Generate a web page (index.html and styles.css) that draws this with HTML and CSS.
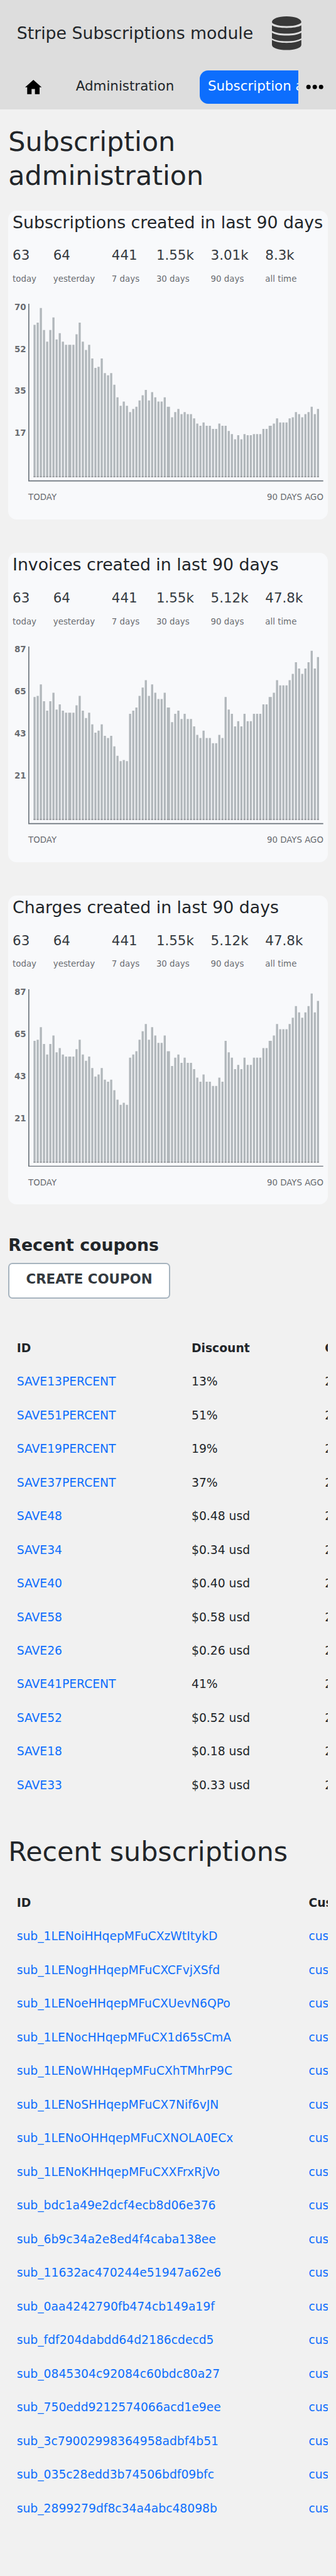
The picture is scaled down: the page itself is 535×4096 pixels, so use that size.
FILE: index.html
```html
<!DOCTYPE html>
<html lang="en">
<head>
<meta charset="utf-8">
<title>Stripe Subscriptions module</title>
<link rel="stylesheet" href="styles.css">
</head>
<body>
<header class="header">
  <div class="brand">
    <span class="brand-title">Stripe Subscriptions module</span>
    <svg class="brand-icon" viewBox="0 0 56 64"><path d="M0 11C0 4.500 12 0 28 0s28 4.500 28 11c0 3-10 7.500-28 7.500S0 14 0 11zM0 17c6 3.500 16 5 28 5s22-1.500 28-5v10.500c-6 3.700-16 5.400-28 5.400S6 31.200 0 27.500zM0 31c6 3.700 16 5.500 28 5.500s22-1.800 28-5.500v11c-6 3.700-16 5.400-28 5.400S6 45.700 0 42zM0 45c6 3.700 16 5.600 28 5.600s22-1.900 28-5.600v9c0 6-12 10-28 10S0 60 0 54z"/></svg>
  </div>
  <nav class="nav">
    <a class="nav-home"><svg class="home-icon" viewBox="0 0 32 28"><path d="M16 0L32 14.200H28V27.600H19V17.500H12.500V27.600H4V14.200H0z"/></svg></a>
    <a class="nav-link">Administration</a>
    <div class="nav-clip"><a class="nav-tab">Subscription administration</a></div>
    <svg class="dots" viewBox="0 0 34 10"><circle cx="5" cy="5" r="4.200"/><circle cx="17" cy="5" r="4.200"/><circle cx="29" cy="5" r="4.200"/></svg>
  </nav>
</header>
<main class="main">
  <h1 class="page-title">Subscription administration</h1>

  <section class="card">
    <h2 class="card-title">Subscriptions created in last 90 days</h2>
    <div class="stats">
      <div><b class="num">63</b><span class="lbl">today</span></div>
      <div><b class="num">64</b><span class="lbl">yesterday</span></div>
      <div><b class="num">441</b><span class="lbl">7 days</span></div>
      <div><b class="num">1.55k</b><span class="lbl">30 days</span></div>
      <div><b class="num">3.01k</b><span class="lbl">90 days</span></div>
      <div><b class="num">8.3k</b><span class="lbl">all time</span></div>
    </div>
    <div class="chart">
      <div class="scale"><span>70</span><span>52</span><span>35</span><span>17</span></div>
      <svg class="plot" viewBox="0 0 562 338" data-series="subscriptions"></svg>
    </div>
    <div class="range"><span>TODAY</span><span>90 DAYS AGO</span></div>
  </section>

  <section class="card">
    <h2 class="card-title">Invoices created in last 90 days</h2>
    <div class="stats">
      <div><b class="num">63</b><span class="lbl">today</span></div>
      <div><b class="num">64</b><span class="lbl">yesterday</span></div>
      <div><b class="num">441</b><span class="lbl">7 days</span></div>
      <div><b class="num">1.55k</b><span class="lbl">30 days</span></div>
      <div><b class="num">5.12k</b><span class="lbl">90 days</span></div>
      <div><b class="num">47.8k</b><span class="lbl">all time</span></div>
    </div>
    <div class="chart">
      <div class="scale"><span>87</span><span>65</span><span>43</span><span>21</span></div>
      <svg class="plot" viewBox="0 0 562 338" data-series="invoices"></svg>
    </div>
    <div class="range"><span>TODAY</span><span>90 DAYS AGO</span></div>
  </section>

  <section class="card">
    <h2 class="card-title">Charges created in last 90 days</h2>
    <div class="stats">
      <div><b class="num">63</b><span class="lbl">today</span></div>
      <div><b class="num">64</b><span class="lbl">yesterday</span></div>
      <div><b class="num">441</b><span class="lbl">7 days</span></div>
      <div><b class="num">1.55k</b><span class="lbl">30 days</span></div>
      <div><b class="num">5.12k</b><span class="lbl">90 days</span></div>
      <div><b class="num">47.8k</b><span class="lbl">all time</span></div>
    </div>
    <div class="chart">
      <div class="scale"><span>87</span><span>65</span><span>43</span><span>21</span></div>
      <svg class="plot" viewBox="0 0 562 338" data-series="charges"></svg>
    </div>
    <div class="range"><span>TODAY</span><span>90 DAYS AGO</span></div>
  </section>

  <h2 class="coupons-title">Recent coupons</h2>
  <a class="button">CREATE COUPON</a>

  <div class="table coupons">
    <div class="row head"><span>ID</span><span>Discount</span><span>Created</span></div>
    <div class="row"><a>SAVE13PERCENT</a><span>13%</span><span>2022</span></div>
    <div class="row"><a>SAVE51PERCENT</a><span>51%</span><span>2022</span></div>
    <div class="row"><a>SAVE19PERCENT</a><span>19%</span><span>2022</span></div>
    <div class="row"><a>SAVE37PERCENT</a><span>37%</span><span>2022</span></div>
    <div class="row"><a>SAVE48</a><span>$0.48 usd</span><span>2022</span></div>
    <div class="row"><a>SAVE34</a><span>$0.34 usd</span><span>2022</span></div>
    <div class="row"><a>SAVE40</a><span>$0.40 usd</span><span>2022</span></div>
    <div class="row"><a>SAVE58</a><span>$0.58 usd</span><span>2022</span></div>
    <div class="row"><a>SAVE26</a><span>$0.26 usd</span><span>2022</span></div>
    <div class="row"><a>SAVE41PERCENT</a><span>41%</span><span>2022</span></div>
    <div class="row"><a>SAVE52</a><span>$0.52 usd</span><span>2022</span></div>
    <div class="row"><a>SAVE18</a><span>$0.18 usd</span><span>2022</span></div>
    <div class="row"><a>SAVE33</a><span>$0.33 usd</span><span>2022</span></div>
  </div>

  <h2 class="subs-title">Recent subscriptions</h2>
  <div class="table subs">
    <div class="row head"><span>ID</span><span>Customer</span></div>
    <div class="row"><a>sub_1LENoiHHqepMFuCXzWtItykD</a><a>cus_</a></div>
    <div class="row"><a>sub_1LENogHHqepMFuCXCFvjXSfd</a><a>cus_</a></div>
    <div class="row"><a>sub_1LENoeHHqepMFuCXUevN6QPo</a><a>cus_</a></div>
    <div class="row"><a>sub_1LENocHHqepMFuCX1d65sCmA</a><a>cus_</a></div>
    <div class="row"><a>sub_1LENoWHHqepMFuCXhTMhrP9C</a><a>cus_</a></div>
    <div class="row"><a>sub_1LENoSHHqepMFuCX7Nif6vJN</a><a>cus_</a></div>
    <div class="row"><a>sub_1LENoOHHqepMFuCXNOLA0ECx</a><a>cus_</a></div>
    <div class="row"><a>sub_1LENoKHHqepMFuCXXFrxRjVo</a><a>cus_</a></div>
    <div class="row"><a>sub_bdc1a49e2dcf4ecb8d06e376</a><a>cus_</a></div>
    <div class="row"><a>sub_6b9c34a2e8ed4f4caba138ee</a><a>cus_</a></div>
    <div class="row"><a>sub_11632ac470244e51947a62e6</a><a>cus_</a></div>
    <div class="row"><a>sub_0aa4242790fb474cb149a19f</a><a>cus_</a></div>
    <div class="row"><a>sub_fdf204dabdd64d2186cdecd5</a><a>cus_</a></div>
    <div class="row"><a>sub_0845304c92084c60bdc80a27</a><a>cus_</a></div>
    <div class="row"><a>sub_750edd9212574066acd1e9ee</a><a>cus_</a></div>
    <div class="row"><a>sub_3c79002998364958adbf4b51</a><a>cus_</a></div>
    <div class="row"><a>sub_035c28edd3b74506bdf09bfc</a><a>cus_</a></div>
    <div class="row"><a>sub_2899279df8c34a4abc48098b</a><a>cus_</a></div>
  </div>
</main>
<script src="charts.js"></script>
</body>
</html>
```

FILE: styles.css
```css
/* 1rem is ten design units; the layout is 64rem wide. */
html { font-size: 8.3575px; }
* { box-sizing: border-box; }
body {
  margin: 0;
  height: 490.1rem;
  overflow: hidden;
  background: #f1f1f1;
  color: #212529;
  font-family: "DejaVu Sans", sans-serif;
  font-size: 2.56rem;
}
h1, h2 { margin: 0; font-weight: 400; }

.header { height: 20.8rem; background: #ddd; padding-top: 3.07rem; }
.brand { display: flex; height: 10.33rem; padding-left: 3.2rem; }
.brand-title { width: 48.6rem; font-size: 3.2rem; line-height: 6.4rem; white-space: nowrap; }
.brand-icon { width: 5.6rem; height: 6.4rem; margin-top: 0.1rem; fill: #383838; }

.nav { display: flex; height: 6.4rem; line-height: 5.9rem; white-space: nowrap; }
.nav-home { width: 14.45rem; padding: 1.85rem 0 0 4.84rem; line-height: 0; }
.home-icon { width: 3.15rem; height: 2.76rem; fill: #000; }
.nav-link { width: 23.55rem; }
.nav-clip { width: 18.8rem; overflow: hidden; }
.nav-tab { display: block; width: 42rem; height: 6.4rem; padding-left: 1.6rem; border-radius: 1.6rem; background: #0d6efd; color: #fff; }
.dots { width: 3.4rem; height: 1rem; margin: 2.67rem 0 0 1.5rem; }

.main { padding: 3.05rem 1.6rem 0; }
.page-title { height: 16.2rem; font-size: 5.12rem; line-height: 6.4rem; }

.card { height: 58.77rem; margin-bottom: 6.4rem; padding: 0 0.8rem; border-radius: 1.6rem; background: #f8f9fb; }
.card-title { height: 6.53rem; font-size: 3.2rem; line-height: 4.6rem; white-space: nowrap; }
.stats { display: flex; gap: 3.2rem; height: 10.7rem; white-space: nowrap; }
.num { display: block; height: 5.36rem; font-size: 2.56rem; font-weight: 400; line-height: 4rem; color: #343a40; }
.lbl { display: block; font-size: 1.6rem; line-height: 2.4rem; color: #696c71; }
.chart { display: flex; gap: 0.42rem; }
.scale { width: 2.58rem; font-size: 1.6rem; font-weight: 700; line-height: 2.4rem; text-align: right; color: #696c71; }
.scale span { display: block; height: 8rem; }
.plot { display: block; width: 56.2rem; height: 33.8rem; margin-top: 0.57rem; }
.axis { fill: #6c757d; }
.bars { fill: #b1b7bb; }
.feet { fill: #999b9f; }
.range { display: flex; justify-content: space-between; padding-left: 3rem; margin-top: 1.85rem; font-size: 1.6rem; line-height: 2.4rem; color: #696c71; }

.coupons-title { height: 5.48rem; margin-top: -0.79rem; font-size: 3.2rem; font-weight: 700; line-height: 4.4rem; }
.button {
  display: block;
  width: 30.8rem;
  height: 6.8rem;
  border: 2px solid #a7b4bf;
  border-radius: 0.8rem;
  background: #fff;
  color: #343a40;
  font-size: 2.56rem;
  font-weight: 700;
  line-height: 5.8rem;
  text-align: center;
}

.table { overflow: hidden; padding-left: 1.6rem; font-size: 2.24rem; line-height: 6.4rem; white-space: nowrap; }
.table a { color: #0d6efd; }
.row { display: grid; height: 6.4rem; }
.head { font-weight: 700; }
.coupons { margin-top: 6.22rem; }
.coupons .row { grid-template-columns: 33.3rem 25.4rem 10rem; }
.subs-title { margin-top: 6.31rem; padding-bottom: 3.27rem; font-size: 5.12rem; line-height: 6.4rem; white-space: nowrap; }
.subs .row { grid-template-columns: 55.6rem 20rem; }
```

FILE: charts.js
```js
// Bar heights per day, today first, in plot units (322 = tallest).
const series = {
  subscriptions: [290,294,322,280,258,280,304,262,274,258,252,252,252,272,294,258,242,252,226,208,210,226,198,194,198,176,152,136,144,136,124,130,134,146,156,166,146,162,152,144,144,152,134,114,124,130,120,124,120,120,112,102,98,104,98,98,92,92,102,98,98,88,82,72,80,72,82,80,80,82,82,82,92,92,98,102,112,104,104,104,112,114,124,120,114,120,124,134,120,130],
  invoices: [234,236,258,226,208,226,242,210,220,208,204,204,204,218,236,208,194,204,182,166,170,182,160,156,160,140,122,112,114,112,202,208,214,236,252,266,236,258,242,230,230,242,214,186,202,208,192,202,192,192,178,162,156,170,156,156,146,146,162,156,234,210,202,178,188,178,202,188,188,202,202,202,220,220,234,242,266,256,256,256,266,278,300,288,278,288,300,322,288,310],
  charges: [232,234,258,226,206,226,242,210,218,206,202,202,202,216,234,206,194,202,180,164,168,180,158,154,158,138,120,110,114,110,200,206,212,234,250,264,234,258,242,228,228,242,212,184,200,206,190,200,190,190,178,162,154,168,154,154,146,146,162,154,232,210,200,178,186,178,200,186,186,200,200,200,218,218,232,242,264,254,254,254,264,276,298,286,276,286,298,322,286,308]
};
const wide = [11, 42, 74];

document.querySelectorAll(".plot").forEach(plot => {
  let bars = "", feet = "", x = 10;
  series[plot.dataset.series].forEach((h, i) => {
    const w = wide.includes(i) ? 6 : 4;
    bars += `M${x} ${330 - h}h${w}v${h}h${-w}z`;
    feet += `M${x} 328h${w}v2h${-w}z`;
    x += w + 2;
  });
  plot.innerHTML = `<path class="axis" d="M0 0H2V336H562V338H0z"/><path class="bars" d="${bars}"/><path class="feet" d="${feet}"/>`;
});
```
